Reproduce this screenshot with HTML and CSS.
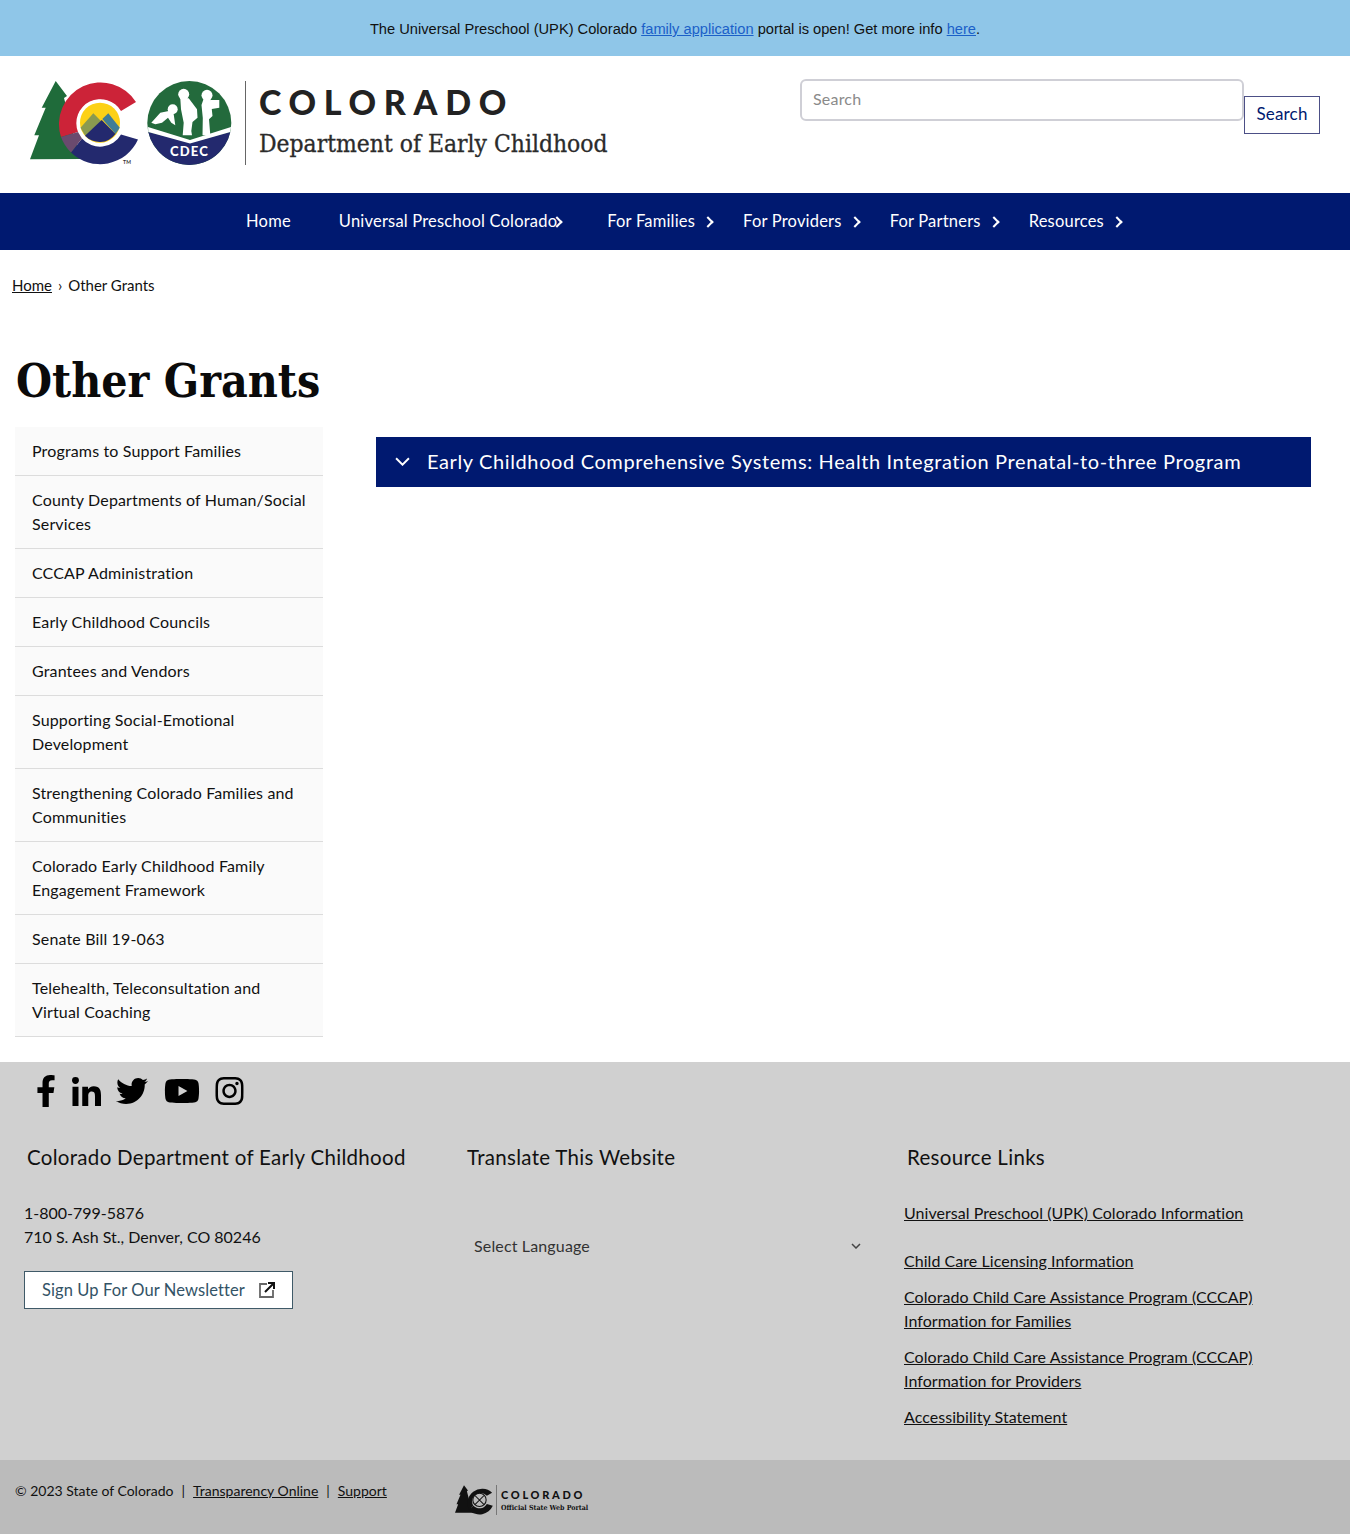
FILE: index.html
```html
<!DOCTYPE html>
<html lang="en">
<head>
<meta charset="utf-8">
<title>Other Grants | Colorado Department of Early Childhood</title>
<link rel="stylesheet" href="styles.css">
</head>
<body>
<div class="banner">The Universal Preschool (UPK) Colorado <a href="#">family application</a> portal is open! Get more info <a href="#">here</a>.</div>

<header class="site-header">
  <a class="brand" href="#">
    <svg class="brand-mark" viewBox="0 0 216 86" aria-hidden="true">
      <path d="M25.700 1 L37 16 L34 18 L45 60 L52 79 L0 79.300 L9 55.300 L4.300 55.300 L15.700 27.700 L11.700 27.700 Z" fill="#1f6b3a"/>
      <path d="M106 22 A41.700 41.700 0 0 0 31 57 L48 52 A24 24 0 0 1 91 31 Z" fill="#cc2338"/>
      <path d="M108 59.500 A41.700 41.700 0 0 1 41 72.500 L52 58.500 A24 24 0 0 0 91 54.400 Z" fill="#23296e"/>
      <path d="M31 57 L48 52 L52 58.500 L41 72.500 A41.700 41.700 0 0 1 31 57 Z" fill="#6a4a6e"/>
      <circle cx="70" cy="42.700" r="23" fill="#fff"/>
      <circle cx="70" cy="42.700" r="20" fill="#fcd116"/>
      <path d="M63.300 33.300 L72 42 L60 58 L55 55.300 L50.500 47.700 Z" fill="#8a9a50"/>
      <path d="M78.300 33.300 L89.800 47.700 L85.500 54 L72.300 39 Z" fill="#3f7d96"/>
      <path d="M71.700 40 L85.500 54 A20 20 0 0 1 55 55.800 Z" fill="#23296e"/>
      <ellipse cx="159.300" cy="43" rx="42" ry="42" fill="#236a3c"/>
      <path d="M118.300 52 L160 62.700 L200.300 52 A42 42 0 0 1 118.300 52 Z" fill="#23296e"/>
      <path d="M118 47 L160 60 L201 47 L200.300 52 L160 63.500 L118.300 52 Z" fill="#fff"/>
      <circle cx="142.700" cy="29.300" r="5" fill="#fff"/>
      <path d="M121.300 42.700 L130.300 32.700 L138.700 31 L143.700 34.300 L145.300 45.300 L141.300 42.700 L138 37.700 L132 42.700 L125.300 44.300 Z" fill="#fff"/>
      <circle cx="153.700" cy="14.300" r="5.500" fill="#fff"/>
      <path d="M150.300 18.300 L158.700 18.300 L167 29.300 L167.500 37.700 L162.500 42 L161.300 51 L162 55.300 L152.700 55.300 L153.700 42.700 L151 29.300 Z" fill="#fff"/>
      <circle cx="177" cy="15.300" r="5.500" fill="#fff"/>
      <path d="M173.200 20 L180.800 20 L182.500 36 L179 39.300 L180.300 55.300 L172.500 55.300 L172.800 38 L171.500 25 Z" fill="#fff"/>
      <path d="M180.300 20 L189.300 20 L189.300 27.700 L180.300 29.300 Z" fill="#fff"/>
      <text class="mark-text" x="159.500" y="75.500" text-anchor="middle">CDEC</text>
      <text class="mark-tm" x="93" y="84">TM</text>
      <rect x="215" y="1" width="1.500" height="84" fill="#666"/>
    </svg>
    <span class="brand-text">
      <span class="brand-state">COLORADO</span>
      <span class="brand-dept">Department of Early Childhood</span>
    </span>
  </a>
  <form class="search">
    <input class="search-input" type="text" placeholder="Search" aria-label="Search">
    <button class="search-button" type="button">Search</button>
  </form>
</header>

<nav class="main-nav">
  <a class="nav-item" href="#">Home</a>
  <a class="nav-item has-sub tight" href="#">Universal Preschool Colorado</a>
  <a class="nav-item has-sub" href="#">For Families</a>
  <a class="nav-item has-sub" href="#">For Providers</a>
  <a class="nav-item has-sub" href="#">For Partners</a>
  <a class="nav-item has-sub" href="#">Resources</a>
</nav>

<div class="breadcrumb"><a href="#">Home</a><span class="crumb-sep">›</span><span>Other Grants</span></div>

<h1 class="page-title">Other Grants</h1>

<div class="content">
  <aside class="side-menu">
    <a href="#">Programs to Support Families</a>
    <a href="#">County Departments of Human/Social Services</a>
    <a href="#">CCCAP Administration</a>
    <a href="#">Early Childhood Councils</a>
    <a href="#">Grantees and Vendors</a>
    <a href="#">Supporting Social-Emotional Development</a>
    <a href="#">Strengthening Colorado Families and Communities</a>
    <a href="#">Colorado Early Childhood Family Engagement Framework</a>
    <a href="#">Senate Bill 19-063</a>
    <a href="#">Telehealth, Teleconsultation and Virtual Coaching</a>
  </aside>
  <main class="main-col">
    <button class="accordion" type="button">
      <svg class="accordion-icon" viewBox="0 0 14 8" aria-hidden="true"><path d="M1 1 L7 7 L13 1" fill="none" stroke="#fff" stroke-width="1.800"/></svg>
      <span>Early Childhood Comprehensive Systems: Health Integration Prenatal-to-three Program</span>
    </button>
  </main>
</div>

<footer class="site-footer">
  <div class="social">
    <svg class="ico-f" viewBox="0 0 320 512" aria-label="Facebook"><path d="M279.14 288l14.22-92.66h-88.91v-60.13c0-25.35 12.42-50.06 52.24-50.06h40.42V6.26S260.43 0 225.36 0c-73.22 0-121.08 44.38-121.08 124.72v70.62H22.89V288h81.39v224h100.17V288z"/></svg>
    <svg class="ico-in" viewBox="0 0 448 448" aria-label="LinkedIn"><path d="M100.28 448H7.4V148.9h92.88zM53.79 108.1C24.09 108.1 0 83.5 0 53.8a53.79 53.79 0 0 1 107.58 0c0 29.7-24.1 54.3-53.79 54.3zM447.9 448h-92.68V302.4c0-34.7-.7-79.2-48.29-79.2-48.29 0-55.69 37.7-55.69 76.7V448h-92.78V148.9h89.08v40.8h1.3c12.4-23.5 42.69-48.3 87.88-48.3 94 0 111.28 61.9 111.28 142.3V448z"/></svg>
    <svg class="ico-tw" viewBox="0 0 512 512" aria-label="Twitter"><path d="M459.37 151.716c.325 4.548.325 9.097.325 13.645 0 138.72-105.583 298.558-298.558 298.558-59.452 0-114.68-17.219-161.137-47.106 8.447.974 16.568 1.299 25.34 1.299 49.055 0 94.213-16.568 130.274-44.832-46.132-.975-84.792-31.188-98.112-72.772 6.498.974 12.995 1.624 19.818 1.624 9.421 0 18.843-1.3 27.614-3.573-48.081-9.747-84.143-51.98-84.143-102.985v-1.299c13.969 7.797 30.214 12.67 47.431 13.319-28.264-18.843-46.781-51.005-46.781-87.391 0-19.492 5.197-37.36 14.294-52.954 51.655 63.675 129.3 105.258 216.365 109.807-1.624-7.797-2.599-15.918-2.599-24.04 0-57.828 46.782-104.934 104.934-104.934 30.213 0 57.502 12.67 76.67 33.137 23.715-4.548 46.456-13.32 66.599-25.34-7.798 24.366-24.366 44.833-46.132 57.827 21.117-2.273 41.584-8.122 60.426-16.243-14.292 20.791-32.161 39.308-52.628 54.253z"/></svg>
    <svg class="ico-yt" viewBox="0 0 576 512" aria-label="YouTube"><path d="M549.655 124.083c-6.281-23.65-24.787-42.276-48.284-48.597C458.781 64 288 64 288 64S117.22 64 74.629 75.486c-23.497 6.322-42.003 24.947-48.284 48.597-11.412 42.867-11.412 132.305-11.412 132.305s0 89.438 11.412 132.305c6.281 23.65 24.787 41.5 48.284 47.821C117.22 448 288 448 288 448s170.78 0 213.371-11.486c23.497-6.321 42.003-24.171 48.284-47.821 11.412-42.867 11.412-132.305 11.412-132.305s0-89.438-11.412-132.305zm-317.51 213.508V175.185l142.739 81.205-142.739 81.201z"/></svg>
    <svg class="ico-ig" viewBox="0 0 448 512" aria-label="Instagram"><path d="M224.1 141c-63.6 0-114.9 51.3-114.9 114.9s51.3 114.9 114.9 114.9S339 319.5 339 255.9 287.7 141 224.1 141zm0 189.6c-41.1 0-74.7-33.5-74.7-74.7s33.5-74.7 74.7-74.7 74.7 33.5 74.7 74.7-33.6 74.7-74.7 74.7zm146.4-194.3c0 14.9-12 26.8-26.8 26.8-14.9 0-26.8-12-26.8-26.8s12-26.8 26.8-26.8 26.8 12 26.8 26.8zm76.1 27.2c-1.7-35.9-9.9-67.7-36.2-93.9-26.2-26.2-58-34.4-93.9-36.2-37-2.1-147.9-2.1-184.9 0-35.8 1.7-67.6 9.9-93.9 36.1s-34.4 58-36.2 93.9c-2.1 37-2.1 147.9 0 184.9 1.7 35.9 9.9 67.7 36.2 93.9s58 34.4 93.9 36.2c37 2.1 147.9 2.1 184.9 0 35.9-1.7 67.7-9.9 93.9-36.2 26.2-26.2 34.4-58 36.2-93.9 2.1-37 2.1-147.8 0-184.8zM398.8 388c-7.8 19.6-22.9 34.7-42.6 42.6-29.5 11.7-99.5 9-132.1 9s-102.7 2.6-132.1-9c-19.6-7.8-34.7-22.9-42.6-42.6-11.7-29.5-9-99.5-9-132.1s-2.6-102.7 9-132.1c7.8-19.6 22.9-34.7 42.6-42.6 29.5-11.7 99.5-9 132.1-9s102.7-2.6 132.1 9c19.6 7.8 34.7 22.9 42.6 42.6 11.7 29.5 9 99.5 9 132.1s2.7 102.7-9 132.1z"/></svg>
  </div>
  <div class="footer-cols">
    <section class="footer-col">
      <h2>Colorado Department of Early Childhood</h2>
      <p>1-800-799-5876<br>710 S. Ash St., Denver, CO 80246</p>
      <a class="newsletter" href="#">Sign Up For Our Newsletter
        <svg class="ext" viewBox="0 0 18 18" aria-hidden="true">
          <path d="M9 3 H2 V16 H15 V9" fill="none" stroke="#666" stroke-width="1.800"/>
          <path d="M7 11 L15.500 2.500 M10 2 H16 V8" fill="none" stroke="#111" stroke-width="2"/>
        </svg>
      </a>
    </section>
    <section class="footer-col">
      <h2>Translate This Website</h2>
      <div class="language">
        <span>Select Language</span>
        <svg viewBox="0 0 10 6" aria-hidden="true"><path d="M1 1 L5 5 L9 1" fill="none" stroke="#444" stroke-width="1.500"/></svg>
      </div>
    </section>
    <section class="footer-col">
      <h2>Resource Links</h2>
      <ul class="res-links">
        <li class="first"><a href="#">Universal Preschool (UPK) Colorado Information</a></li>
        <li><a href="#">Child Care Licensing Information</a></li>
        <li><a href="#">Colorado Child Care Assistance Program (CCCAP) Information for Families</a></li>
        <li><a href="#">Colorado Child Care Assistance Program (CCCAP) Information for Providers</a></li>
        <li><a href="#">Accessibility Statement</a></li>
      </ul>
    </section>
  </div>
</footer>

<div class="legal">
  <div class="legal-text">© 2023 State of Colorado<span class="bar">|</span><a href="#">Transparency Online</a><span class="bar">|</span><a href="#">Support</a></div>
  <div class="portal">
    <svg class="portal-mark" viewBox="0 0 42 30" aria-hidden="true">
      <g transform="scale(0.35)">
        <path d="M25.700 1 L37 16 L34 18 L45 60 L52 79 L0 79.300 L9 55.300 L4.300 55.300 L15.700 27.700 L11.700 27.700 Z" fill="#111"/>
        <path d="M106 22 A41.700 41.700 0 0 0 41 72.500 L52 58.500 A24 24 0 0 1 91 31 Z" fill="#111"/>
        <path d="M108 59.500 A41.700 41.700 0 0 1 41 72.500 L52 58.500 A24 24 0 0 0 91 54.400 Z" fill="#111"/>
        <circle cx="70" cy="42.700" r="19" fill="none" stroke="#111" stroke-width="3"/>
        <path d="M57 30 L83 56 M83 30 L57 56" fill="none" stroke="#111" stroke-width="3"/>
      </g>
      <rect x="41" y="0" width="1" height="30" fill="#777"/>
    </svg>
    <div class="portal-text"><span class="portal-state">COLORADO</span><span class="portal-sub">Official State Web Portal</span></div>
  </div>
</div>
</body>
</html>
```
FILE: styles.css
```css
* { box-sizing: border-box; }
html, body { margin: 0; padding: 0; }
body {
  font-family: "Lato", "Noto Sans", sans-serif;
  font-size: 16px;
  line-height: 24px;
  color: #111;
  background: #fff;
  letter-spacing: 0.15px;
}
a { color: inherit; }

.banner {
  height: 56px;
  background: #8fc6e8;
  font-family: "Liberation Sans", Arial, sans-serif;
  font-size: 14.670px;
  letter-spacing: 0;
  line-height: 58px;
  text-align: center;
  color: #111;
}
.banner a { color: #1b60c8; }

.site-header {
  height: 137px;
  display: flex;
  justify-content: space-between;
  align-items: flex-start;
  padding: 24px 30px 0;
}
.brand {
  display: flex;
  gap: 13px;
  text-decoration: none;
  color: #222;
}
.brand-mark { width: 216px; height: 86px; display: block; }
.mark-text { font: 900 13px "Lato", sans-serif; fill: #fff; letter-spacing: 1.200px; }
.mark-tm { font: 700 5px "Lato", sans-serif; fill: #333; }
.brand-text { display: flex; flex-direction: column; }
.brand-state {
  font-weight: 900;
  font-size: 34px;
  line-height: 44px;
  letter-spacing: 7.700px;
  color: #222;
}
.brand-dept {
  font-family: "DejaVu Serif Condensed", "DejaVu Serif", serif;
  font-size: 24.400px;
  line-height: 40px;
  letter-spacing: 0;
  color: #2b2b2b;
  -webkit-text-stroke: 0.3px #2b2b2b;
}
.search { display: flex; align-items: flex-start; }
.search-input {
  width: 444px;
  height: 42px;
  margin-top: -1px;
  border: 2px solid #cfcfd6;
  border-radius: 6px;
  padding: 0 11px 4px;
  font: 16px "Lato", sans-serif;
  letter-spacing: 0.2px;
  background: #fff;
}
.search-input::placeholder { color: #8a8a8a; opacity: 1; }
.search-button {
  width: 76px;
  height: 38px;
  margin-top: 16px;
  background: #fff;
  border: 1px solid #4c4f86;
  color: #001970;
  font: 17px "Lato", sans-serif;
  letter-spacing: 0.2px;
  padding: 0 0 3px;
}

.main-nav {
  height: 57px;
  background: #001970;
  display: flex;
  justify-content: center;
}
.nav-item {
  position: relative;
  padding: 0 24px;
  line-height: 56px;
  font-size: 16.500px;
  color: #fff;
  letter-spacing: 0.2px;
  text-decoration: none;
  white-space: nowrap;
}
.has-sub::after {
  content: "";
  position: absolute;
  right: 7px;
  top: 25px;
  width: 6px;
  height: 6px;
  border-top: 2px solid #fff;
  border-right: 2px solid #fff;
  transform: rotate(45deg);
}
.has-sub.tight { margin-right: 2px; }
.has-sub.tight::after { right: 20px; }

.breadcrumb {
  padding: 23px 12px 0;
  height: 60px;
  font-size: 15px;
  letter-spacing: 0;
  color: #111;
}
.crumb-sep { margin: 0 6px; }

.page-title {
  margin: 41px 0 0 16px;
  font-family: "DejaVu Serif Condensed", "DejaVu Serif", serif;
  font-weight: 700;
  font-size: 46px;
  line-height: 60px;
  letter-spacing: 0;
  color: #0a0a0a;
}

.content {
  display: grid;
  grid-template-columns: 308px 935px;
  column-gap: 53px;
  padding: 16px 0 25px 15px;
}
.side-menu { display: flex; flex-direction: column; }
.side-menu a {
  display: block;
  background: #fafafa;
  border-bottom: 1px solid #dcdcdc;
  padding: 12px 17px;
  color: #111;
  text-decoration: none;
}
.main-col { padding-top: 10px; }
.accordion {
  width: 100%;
  height: 50px;
  display: flex;
  align-items: center;
  gap: 17px;
  padding: 0 0 2px 19px;
  background: #001970;
  border: 0;
  color: #fff;
  font: 20px "Lato", sans-serif;
  letter-spacing: 0.62px;
  text-align: left;
}
.accordion-icon { width: 15px; height: 9px; flex: none; }

.site-footer {
  height: 398px;
  background: #d0d0d0;
}
.social {
  display: flex;
  align-items: center;
  gap: 15.500px;
  padding: 13px 0 0 36px;
  height: 45px;
}
.social svg { display: block; height: 32px; fill: #000; }
.ico-f { width: 20px; }
.social .ico-in { width: 29px; height: 29px; }
.ico-tw { width: 32px; }
.ico-yt { width: 36px; }
.social .ico-ig { width: 29px; height: 32px; }

.footer-cols {
  display: grid;
  grid-template-columns: 440px 440px 420px;
  padding: 36px 0 0 24px;
}
.footer-col h2 {
  margin: -1px 0 29px 3px;
  font-size: 20.500px;
  font-weight: 400;
  line-height: 30px;
  letter-spacing: 0.3px;
  color: #111;
}
.footer-col p { margin: 0 0 22px; letter-spacing: 0; }
.newsletter {
  display: inline-flex;
  align-items: center;
  justify-content: space-between;
  width: 269px;
  height: 38px;
  padding: 0 16px 0 17px;
  background: #fff;
  border: 1px solid #3f5a68;
  color: #335366;
  font-size: 16.500px;
  letter-spacing: 0.1px;
  text-decoration: none;
}
.ext { width: 18px; height: 18px; }
.language {
  display: flex;
  justify-content: space-between;
  align-items: center;
  width: 398px;
  height: 36px;
  margin: 56px 0 0 3px;
  padding: 0 4px 0 7px;
  color: #333;
}
.language svg { width: 10px; height: 6px; }
.res-links { list-style: none; margin: 0; padding: 0; width: 355px; letter-spacing: 0.05px; }
.res-links li { margin-bottom: 12px; }
.res-links li.first { margin-bottom: 24px; }

.legal {
  height: 74px;
  background: #bbb;
  display: flex;
  padding: 19px 0 0 15px;
}
.legal-text { width: 440px; font-size: 14px; letter-spacing: 0; }
.bar { margin: 0 8px; }
.portal { display: flex; gap: 4px; margin-top: 6px; align-items: flex-start; }
.portal-mark { width: 42px; height: 30px; display: block; }
.portal-text { display: flex; flex-direction: column; padding-top: 2px; }
.portal-state {
  font-weight: 900;
  font-size: 11px;
  line-height: 15px;
  letter-spacing: 2.700px;
  color: #111;
}
.portal-sub {
  font-family: "DejaVu Serif Condensed", "DejaVu Serif", serif;
  font-weight: 700;
  font-size: 7px;
  line-height: 11px;
  letter-spacing: 0;
  color: #111;
}
```
